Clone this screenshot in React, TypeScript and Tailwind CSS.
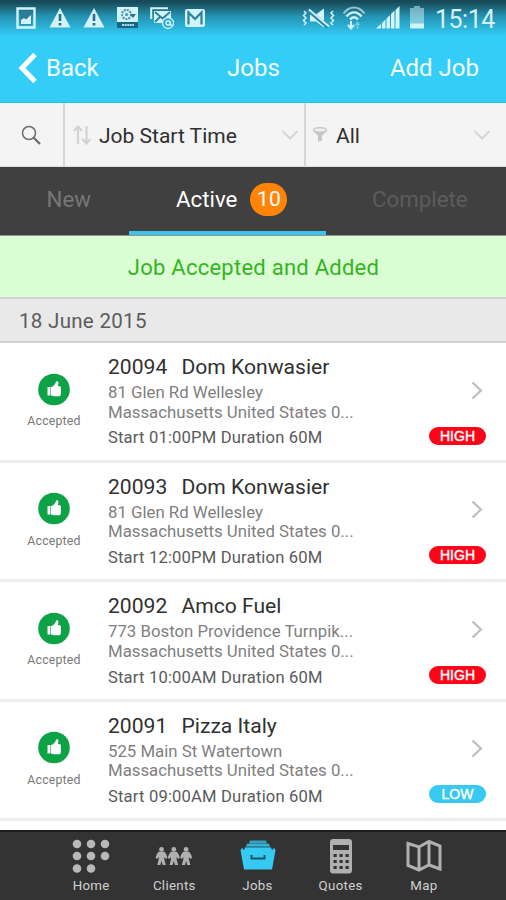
import React from 'react';

const jobs = [
  { id: '20094', name: 'Dom Konwasier', street: '81 Glen Rd Wellesley', start: '01:00PM', priority: 'HIGH' },
  { id: '20093', name: 'Dom Konwasier', street: '81 Glen Rd Wellesley', start: '12:00PM', priority: 'HIGH' },
  { id: '20092', name: 'Amco Fuel', street: '773 Boston Providence Turnpik...', start: '10:00AM', priority: 'HIGH' },
  { id: '20091', name: 'Pizza Italy', street: '525 Main St Watertown', start: '09:00AM', priority: 'LOW' },
];

function StatusBar() {
  return (
    <div className="flex h-[36px] items-start justify-between bg-linear-to-b from-[#174a58] from-5% via-[#2493b2] via-45% to-[#33cdf7] pl-[16px] pr-[10px] pt-[6px] text-[#d3f3fb]">
      <div className="flex">
        <svg className="mt-px h-[22px] w-[20px]" viewBox="0 0 20 22" fill="none" stroke="currentColor">
          <path d="M1.5 1.5h17v19h-17z" strokeWidth="2.4" />
          <path d="M4.5 4.5h11v13h-11z" fill="#2c7c94" stroke="none" />
          <path d="M5 17v-4l3-2 2 1.5 5-4.5v9z" fill="currentColor" stroke="none" />
        </svg>
        {[0, 1].map((i) => (
          <svg key={i} className={i ? 'ml-[12px] mt-px h-[22px] w-[22px]' : 'ml-[13px] mt-px h-[22px] w-[22px]'} viewBox="0 0 22 22">
            <path d="M11 1 21.5 20.5H.5z" fill="currentColor" />
            <path d="M11 7v7M11 16v2.4" stroke="#24718a" strokeWidth="2.6" />
          </svg>
        ))}
        <svg className="ml-[11px] h-[23px] w-[23px]" viewBox="0 0 23 23">
          <path d="M1 1h21v21H1z" fill="currentColor" />
          <path d="M1 16h21v6H1z" fill="#156783" />
          <circle cx="10.5" cy="8.5" r="4.5" fill="none" stroke="#4a93a8" strokeWidth="2" strokeDasharray="2 1" />
          <circle cx="10.5" cy="8.5" r="1.5" fill="#4a93a8" />
          <path d="M14 8h6l-3 4z" fill="#24718a" />
          <path d="M6 19h12" stroke="#b0deea" strokeWidth="2" strokeDasharray="2 .6" />
        </svg>
        <svg className="ml-[11px] mt-px h-[23px] w-[24px]" viewBox="0 0 24 23" fill="none" stroke="currentColor">
          <path d="M1.2 12V1.2H18" strokeWidth="2" />
          <path d="M4 4h17v12H4z" fill="currentColor" stroke="none" />
          <path d="m5 5 7.5 6.5L20 5M5 15l5-5m5 0 3 2.5" stroke="#2b8099" strokeWidth="1.8" />
          <circle cx="18" cy="16" r="5.5" fill="#2ba9cf" strokeWidth="1.3" />
          <circle cx="18" cy="16" r="2" strokeWidth="1.4" />
          <path d="M20 13.5V18h2" strokeWidth="1.3" />
        </svg>
        <svg className="ml-[11px] mt-[3px] h-[18px] w-[20px]" viewBox="0 0 20 18">
          <rect width="20" height="18" rx="2" fill="currentColor" />
          <path d="M3.5 15.5v-12L10 10l6.5-6.5v12" fill="none" stroke="#2a829d" strokeWidth="2.2" />
        </svg>
      </div>
      <div className="flex">
        <svg className="mt-px h-[22px] w-[34px]" viewBox="0 0 34 22" fill="none" stroke="currentColor">
          <path d="M8 7.5h6l8-6v19l-8-6H8z" fill="currentColor" stroke="none" />
          <path d="m6 3 20 17" stroke="#278aa7" strokeWidth="4" />
          <path d="m7 2.5 20 17" strokeWidth="1.8" />
          <path d="m2 4 2 2-2.5 2.5L4 11l-2.5 2.5L4 16l-2 2M31 4l-2 2 2.5 2.5L29 11l2.5 2.5L29 16l2 2" strokeWidth="1.5" />
        </svg>
        <svg className="ml-[6px] h-[24px] w-[24px]" viewBox="0 0 24 24" fill="none" stroke="currentColor">
          <path d="M1.5 7.5c6-8 15-8 21 0" strokeWidth="2" opacity=".65" />
          <path d="M4.5 10.5c4.5-5.5 10.5-5.5 15 0M8 13.5c2.5-3 5.5-3 8 0" strokeWidth="2.4" />
          <path d="M9 15v7m-3-3 3 3.5 3-3.5" strokeWidth="2" />
          <path d="M15.5 23v-6m-2 2 2-2.5 2 2.5" strokeWidth="1.5" opacity=".45" />
        </svg>
        <svg className="ml-[10px] h-[23px] w-[24px]" viewBox="0 0 24 23" fill="currentColor">
          <path d="M0 22.5 5 18v4.5zM6 17l3.5-3.5v9H6zM10.5 12.5 14 9v13.5h-3.5zM15 8l3.5-3.5v18H15zM19.5 4l4-4v22.5h-4z" />
        </svg>
        <svg className="ml-[9px] h-[23px] w-[16px]" viewBox="0 0 16 23" fill="currentColor">
          <path d="M5 0h6v2h4v16H1V2h4z" opacity=".5" />
          <path d="M1 17.5h14v5H1z" />
        </svg>
        <span className="ml-[10px] w-[61px] whitespace-nowrap text-[25px] leading-[27px] tracking-[-0.5px]">15:14</span>
      </div>
    </div>
  );
}

function Header() {
  return (
    <div className="grid h-[67px] grid-cols-3 items-center border-b border-[#1cc2f0] bg-[#33cdf7] pb-[2px] text-[24px] leading-[28px] text-[#f2fcff]">
      <div className="flex items-center pl-[18px]">
        <svg className="h-[32px] w-[20px]" viewBox="0 0 20 32" fill="none" stroke="white" strokeWidth="5">
          <path d="M17 2.5 4 16l13 13.5" />
        </svg>
        <span className="ml-[8px]">Back</span>
      </div>
      <div className="pl-px text-center">Jobs</div>
      <div className="pr-[27px] text-right">Add Job</div>
    </div>
  );
}

function Chevron() {
  return (
    <svg className="h-[10px] w-[18px]" viewBox="0 0 18 10" fill="none" stroke="#d6d6d6" strokeWidth="2">
      <path d="M1.5 1 9 8.5 16.5 1" />
    </svg>
  );
}

function Filters() {
  return (
    <div className="flex h-[64px] border-b border-[#dedede] bg-[#f4f4f4] text-[21px] text-[#2f2f2f]">
      <div className="flex w-[65px] items-center border-r-2 border-[#d6d6d6] pl-[21px]">
        <svg className="h-[20px] w-[20px]" viewBox="0 0 20 20" fill="none" stroke="#6c6c6c">
          <circle cx="8" cy="8" r="6.5" strokeWidth="1.5" />
          <path d="m12.5 12.5 6.5 6.5" strokeWidth="2.2" />
        </svg>
      </div>
      <div className="flex w-[241px] items-center border-r-2 border-[#d6d6d6] pl-[8px] pr-[5px]">
        <svg className="h-[20px] w-[18px]" viewBox="0 0 18 20" fill="none" stroke="#d3d3d3" strokeWidth="2.2">
          <path d="M5 19V2M1 6l4-4.5L9 6M13.5 1v17m-4-4 4 4.500 4-4.500" />
        </svg>
        <span className="ml-[8px] flex-1 pt-[4px]">Job Start Time</span>
        <Chevron />
      </div>
      <div className="flex flex-1 items-center pl-[6px] pr-[15px]">
        <svg className="h-[16px] w-[16px]" viewBox="0 0 16 16">
          <path d="M1 3.5 6 9v6l4-1.5V9l5-5.5z" fill="#c6c6c6" />
          <ellipse cx="8" cy="3" rx="6.5" ry="2.2" fill="#efefef" stroke="#c6c6c6" strokeWidth="1.5" />
        </svg>
        <span className="ml-[8px] flex-1 pt-[4px]">All</span>
        <Chevron />
      </div>
    </div>
  );
}

function Tabs() {
  return (
    <div className="flex h-[69px] border-b border-[#8f918f] bg-[#404040] text-[22.3px] leading-[65px]">
      <div className="w-[129px] pl-[46.5px] text-[#777]">New</div>
      <div className="flex w-[197px] items-center border-b-4 border-[#3dc4ea] pl-[47px] text-white">
        <span>Active</span>
        <span className="ml-[13px] flex h-[33px] w-[37px] items-center justify-center rounded-full bg-[#ff8408] text-[21px] leading-[33px]">
          10
        </span>
      </div>
      <div className="flex-1 pl-[46px] text-[#5c5c5c]">Complete</div>
    </div>
  );
}

function JobRow({ job }: { job: (typeof jobs)[number] }) {
  return (
    <div className="flex h-[119.6px] shrink-0 border-b-[3px] border-[#ececec]">
      <div className="flex w-[108px] flex-col items-center pt-[29.5px]">
        <svg className="h-[33px] w-[33px]" viewBox="0 0 33 33">
          <circle cx="16" cy="16.5" r="15.8" fill="#0da245" />
          <path
            d="M9.5 14h2.7v8.5H9.500zM12.800 14c2.800-.5 4.200-2.500 5.300-5.300.6-1 2.400-.4 2.400 1.100 0 1.200-.4 2.200-.8 3.200 1.800 0 3.200.4 3.200 1.500v6.500c0 1.600-1 2.300-2.400 2.300h-4.900l-2.800-1z"
            fill="white"
          />
        </svg>
        <span className="mt-[7.5px] text-[12.3px] leading-[16px] tracking-[0.2px] text-[#777]">Accepted</span>
      </div>
      <div className="w-[290px] pt-[11px]">
        <div className="flex text-[21.1px] leading-[26px] text-[#303030]">
          <span className="w-[73.5px]">{job.id}</span>
          <span>{job.name}</span>
        </div>
        <div className="mt-[3px] text-[16.8px] leading-[19.7px] text-[#808080]">
          <div>{job.street}</div>
          <div>Massachusetts United States 0...</div>
        </div>
        <div className="mt-[6px] text-[16.6px] leading-[20px] tracking-[0.17px] text-[#5a5a5a]">Start {job.start} Duration 60M</div>
      </div>
      <div className="flex flex-1 flex-col items-end pr-[20px] pt-[37.5px]">
        <svg className="mr-[3px] h-[19px] w-[12px]" viewBox="0 0 12 19" fill="none" stroke="#bdbdbd" strokeWidth="2.2">
          <path d="m1.5 1.5 8.5 8-8.5 8" />
        </svg>
        <span
          className={`mt-[27px] flex h-[18px] w-[57px] items-center justify-center rounded-full font-['Liberation_Sans'] text-[14px] leading-[18px] text-white [-webkit-text-stroke:0.4px_white] ${
            job.priority === 'HIGH' ? 'bg-[#ff0418]' : 'bg-[#36c9f2]'
          }`}
        >
          {job.priority}
        </span>
      </div>
    </div>
  );
}

function PersonShape({ x }: { x: number }) {
  return (
    <g transform={`translate(${x} 0)`}>
      <circle cx="5.5" cy="2.4" r="2.4" />
      <path d="M2.500 4.800h6l2 3 1 3-1.500 1.200L8.300 10v2.300L9.800 18H6.700l-1.200-4-1.200 4H1.200l1.500-5.700V10L1 12l-1.500-1.200 1-3z" />
    </g>
  );
}

const navItems = [
  {
    label: 'Home',
    icon: (
      <svg className="h-[36px] w-[38px]" viewBox="0 0 38 36" fill="#b8b8b8">
        {[[5, 5], [19, 5], [33, 5], [5, 17], [19, 17], [33, 17], [5, 29.5], [19, 29.5]].map(([x, y]) => (
          <circle key={`${x}-${y}`} cx={x} cy={y} r="4.3" />
        ))}
      </svg>
    ),
  },
  {
    label: 'Clients',
    icon: (
      <svg className="h-[36px] w-[38px]" viewBox="-1 -8 38 36" fill="#b0b0b0">
        <PersonShape x={0} />
        <PersonShape x={12.3} />
        <PersonShape x={24.6} />
      </svg>
    ),
  },
  {
    label: 'Jobs',
    icon: (
      <svg className="h-[36px] w-[36px]" viewBox="0 0 36 36" fill="#36c9f2">
        <path d="M10 1.5h16l1 3H9z" opacity=".75" />
        <path d="M7 4.8h22l1 3H6z" opacity=".85" />
        <path d="M5 8.3h26l1 3h3.5L32 30.5H4L.5 11.3H4zM.5 11.3 2 8.8l2 2.5zM35.5 11.3 34 8.8l-2 2.5z" />
        <path d="M5 8h26" stroke="#1f6f88" strokeWidth=".7" />
        <path d="M11.5 16v3.5h13V16" fill="none" stroke="#17566a" strokeWidth="2" />
      </svg>
    ),
  },
  {
    label: 'Quotes',
    icon: (
      <svg className="h-[36px] w-[24px]" viewBox="0 0 24 36" fill="#333">
        <rect x="1" y="0" width="22" height="34.5" rx="3" fill="#b0b0b0" />
        <path d="M4 6h16v5H4z" />
        {[16, 22, 28].map((y) =>
          [4.5, 10.5, 16.5].map((x) => <rect key={`${x}-${y}`} x={x} y={y - 1} width="3.2" height="3" />)
        )}
      </svg>
    ),
  },
  {
    label: 'Map',
    icon: (
      <svg className="h-[36px] w-[36px]" viewBox="0 0 36 36" fill="none" stroke="#b0b0b0" strokeWidth="3">
        <path d="M2 4.5 13 8l10-5.5L34 7v23l-11-4-10 5-11-4.500zM13 8v23M23 2.5V26" />
      </svg>
    ),
  },
];

function BottomNav() {
  return (
    <div className="flex h-[70px] shrink-0 justify-center border-t-2 border-[#1d1d1d] bg-[#333] pl-[9px]">
      {navItems.map((item) => (
        <div key={item.label} className="flex w-[83.2px] flex-col items-center pt-[7px]">
          {item.icon}
          <span className="mt-[3px] text-[13.3px] leading-[16px] tracking-[0.3px] text-[#d0d0d0]">{item.label}</span>
        </div>
      ))}
    </div>
  );
}

export default function App() {
  return (
    <div className="flex h-[900px] w-[506px] flex-col overflow-hidden bg-white font-[Roboto,sans-serif]">
      <StatusBar />
      <Header />
      <Filters />
      <Tabs />
      <div className="h-[61px] bg-[#dbfdd4] pl-px text-center text-[22px] leading-[63px] tracking-[0.25px] text-[#34b51e]">
        Job Accepted and Added
      </div>
      <div className="h-[46px] border-y-2 border-[#d2d2d2] bg-[#e9e9e9] pl-[19px] text-[20.5px] leading-[44px] tracking-[0.3px] text-[#5c5c5c]">
        18 June 2015
      </div>
      <div className="flex min-h-0 flex-1 flex-col overflow-hidden">
        {jobs.map((job) => (
          <JobRow key={job.id} job={job} />
        ))}
      </div>
      <BottomNav />
    </div>
  );
}
